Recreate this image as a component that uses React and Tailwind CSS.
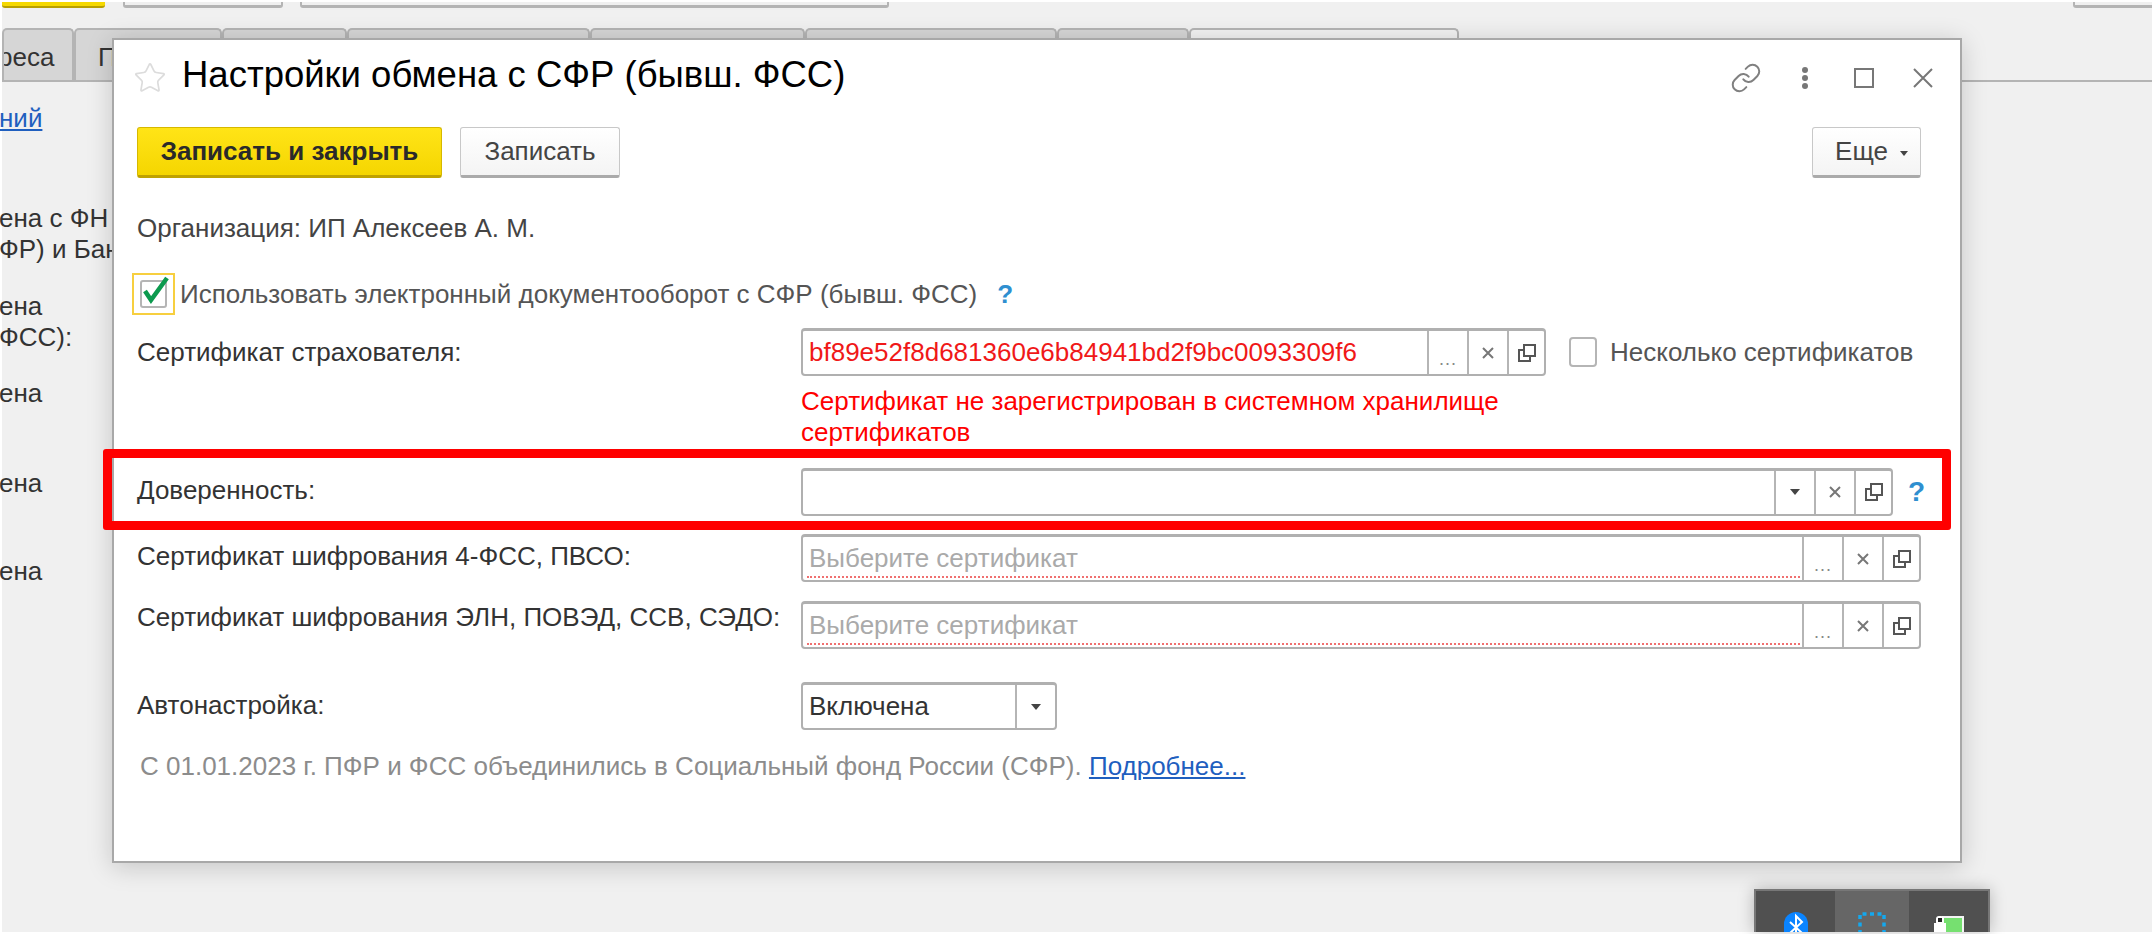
import React from "react";
import { Link, Star } from "lucide-react";

const CopyIcon = () => (
  <svg width="20" height="20" viewBox="0 0 20 20" fill="none" stroke="#555" strokeWidth="2">
    <rect x="7" y="2" width="11" height="11" />
    <path d="M7 7H2v11h11v-5" />
  </svg>
);

const CrossIcon = () => (
  <svg width="12" height="12" viewBox="0 0 12 12" stroke="#777" strokeWidth="2">
    <path d="M1 1l10 10M11 1L1 11" />
  </svg>
);

const DotsIcon = () => (
  <span className="mt-3 text-[18px] leading-none tracking-[1px] text-[#888]">...</span>
);

const ArrowIcon = () => <span className="h-0 w-0 border-x-[5px] border-t-[6px] border-x-transparent border-t-[#444]" />;

const FieldButton = ({ children, className = "w-[40px]" }) => (
  <div className={`flex h-full shrink-0 items-center justify-center border-l-2 border-[#b5b5b5] ${className}`}>
    {children}
  </div>
);

const Field = ({ width, children, first, required }) => (
  <div
    className="relative flex h-[48px] shrink-0 rounded-[4px] border-2 border-t-[3px] border-[#b0b0b0] bg-white"
    style={{ width }}
  >
    <div className="flex min-w-0 flex-1 items-center overflow-hidden whitespace-nowrap pl-[6px] text-[26px]">{children}</div>
    {required && <div className="absolute bottom-[2px] left-[4px] right-[119px] border-b-2 border-dotted border-[#f07070]" />}
    <FieldButton>{first}</FieldButton>
    <FieldButton>
      <CrossIcon />
    </FieldButton>
    <FieldButton className="w-[37px]">
      <CopyIcon />
    </FieldButton>
  </div>
);

const Label = ({ children, className = "" }) => (
  <div className={`w-[664px] shrink-0 text-[26px] leading-[30px] text-[#333] ${className}`}>{children}</div>
);

const Help = ({ className }) => <span className={`font-bold text-[#2f8fd0] ${className}`}>?</span>;

const BackgroundTab = ({ width, children, active }) => (
  <div
    className={`h-[52px] shrink-0 overflow-hidden rounded-t-[5px] border-2 border-b-0 border-[#b4b4b4] pt-[8px] text-[26px] text-[#333] ${
      active ? "bg-[#f2f2f2]" : "bg-[#d6d6d6]"
    }`}
    style={{ width }}
  >
    {children}
  </div>
);

const App = () => {
  return (
    <div
      className="relative h-[934px] w-[2152px] overflow-hidden bg-white pb-[2px] pl-[2px] pt-[2px]"
      style={{ fontFamily: '"Liberation Sans", Arial, sans-serif' }}
    >
      <div className="h-full bg-[#f0f0f0]">
        {/* page behind the dialog */}
        <div className="flex h-[6px]">
          <div className="w-[103px] rounded-b-[3px] border-b-2 border-[#b89f00] bg-[#f5d800]" />
          <div className="ml-[18px] w-[160px] rounded-b-[3px] border-x-2 border-b-[3px] border-[#b4b4b4]" />
          <div className="ml-[17px] w-[589px] rounded-b-[3px] border-x-2 border-b-[3px] border-[#b4b4b4]" />
          <div className="ml-auto w-[79px] rounded-bl-[3px] border-b-[3px] border-l-2 border-[#b4b4b4]" />
        </div>
        <div className="mt-[20px] flex border-b-2 border-[#b4b4b4]">
          <BackgroundTab width="72px">
            <div className="ml-[-6px]">реса</div>
          </BackgroundTab>
          <BackgroundTab width="148px">
            <div className="ml-[22px]">П</div>
          </BackgroundTab>
          <BackgroundTab width="125px" />
          <BackgroundTab width="243px" />
          <BackgroundTab width="215px" />
          <BackgroundTab width="252px" />
          <BackgroundTab width="132px" />
          <BackgroundTab width="270px" active />
        </div>
        <div className="ml-[-3px] w-[113px] overflow-hidden whitespace-nowrap text-[26px] leading-[31px] text-[#333]">
          <div className="mt-[21px] text-[#1f5fbf] underline">ний</div>
          <div className="mt-[69px]">ена с ФН</div>
          <div>ФР) и Бан</div>
          <div className="mt-[26px]">ена</div>
          <div>ФСС):</div>
          <div className="mt-[25px]">ена</div>
          <div className="mt-[59px]">ена</div>
          <div className="mt-[57px]">ена</div>
        </div>
      </div>

      {/* dialog window */}
      <div className="absolute left-[112px] top-[38px] h-[825px] w-[1850px] border-2 border-[#a8a8a8] bg-white pl-[23px] pr-[39px] shadow-[0_4px_24px_rgba(0,0,0,0.18)]">
        <div className="flex h-[87px] items-center pb-[12px]">
          <Star size={34} strokeWidth={1.2} className="ml-[-4px] text-[#dcdcdc]" />
          <h1 className="mb-[4px] ml-[15px] text-[36.5px] font-normal text-black">Настройки обмена с СФР (бывш. ФСС)</h1>
          <div className="ml-auto mr-[-31px] flex items-center text-[#808080]">
            <div className="flex w-[59px] justify-center">
              <Link size={32} strokeWidth={1.5} />
            </div>
            <div className="flex w-[59px] justify-center">
              <svg width="8" height="22" viewBox="0 0 8 22" fill="#777">
                <circle cx="4" cy="3" r="3" />
                <circle cx="4" cy="11" r="3" />
                <circle cx="4" cy="19" r="3" />
              </svg>
            </div>
            <div className="flex w-[59px] justify-center">
              <span className="h-[20px] w-[20px] border-2 border-[#777]" />
            </div>
            <div className="flex w-[59px] justify-center">
              <svg width="20" height="20" viewBox="0 0 20 20" stroke="#777" strokeWidth="2">
                <path d="M1 1l18 18M19 1L1 19" />
              </svg>
            </div>
          </div>
        </div>

        <div className="flex h-[51px] items-stretch">
          <button className="w-[305px] rounded-[3px] border border-[#d6b800] border-b-[3px] border-b-[#bfa200] bg-gradient-to-b from-[#ffe416] to-[#f5d600] text-[26px] font-bold text-[#2a2a2a]">
            Записать и закрыть
          </button>
          <button className="ml-[18px] w-[160px] rounded-[3px] border border-[#c8c8c8] border-b-[3px] border-b-[#aaaaaa] bg-gradient-to-b from-white to-[#f4f4f4] text-[26px] text-[#444]">
            Записать
          </button>
          <button className="ml-auto flex w-[109px] items-center justify-center gap-[12px] rounded-[3px] border border-[#c8c8c8] border-b-[3px] border-b-[#aaaaaa] bg-gradient-to-b from-white to-[#f4f4f4] pl-[10px] text-[26px] text-[#444]">
            Еще
            <span className="mt-[3px] h-0 w-0 border-x-[4px] border-t-[5px] border-x-transparent border-t-[#444]" />
          </button>
        </div>

        <div className="mt-[36px] text-[26px] leading-[28px] text-[#444]">Организация: ИП Алексеев А. М.</div>

        <div className="mt-[31px] flex h-[42px] items-center">
          <div className="ml-[-5px] flex h-[42px] w-[43px] items-center justify-center border-2 border-[#f7cf3f]">
            <div className="relative h-[28px] w-[27px] rounded-[3px] border-2 border-[#b5b5b5]">
              <svg width="30" height="30" viewBox="0 0 30 30" fill="none" stroke="#0c9a4e" strokeWidth="4.5" className="absolute left-[0px] top-[-8px]">
                <path d="M3 17l6 9L25 4" />
              </svg>
            </div>
          </div>
          <span className="ml-[5px] text-[26px] text-[#555]">Использовать электронный документооборот с СФР (бывш. ФСС)</span>
          <Help className="ml-[20px] text-[26px]" />
        </div>

        <div className="mt-[13px] flex items-center">
          <Label>Сертификат страхователя:</Label>
          <Field width="745px" first={<DotsIcon />}>
            <span className="text-[#f01818]">bf89e52f8d681360e6b84941bd2f9bc0093309f6</span>
          </Field>
          <span className="ml-[23px] h-[30px] w-[28px] rounded-[4px] border-2 border-[#b5b5b5]" />
          <span className="ml-[13px] text-[26px] text-[#555]">Несколько сертификатов</span>
        </div>

        <div className="ml-[664px] mt-[10px] w-[745px] text-[26px] leading-[31px] text-[#ff0000]">
          Сертификат не зарегистрирован в системном хранилище сертификатов
        </div>

        {/* red highlight round the row */}
        <div className="ml-[-34px] mr-[-30px] mt-[1px] flex h-[81px] items-center rounded-[3px] border-[9px] border-[#ff0000] pl-[25px] pt-[4px]">
          <Label className="mb-[4px]">Доверенность:</Label>
          <Field width="1092px" first={<ArrowIcon />} />
          <Help className="ml-[15px] text-[28px]" />
        </div>

        <div className="mt-[4px] flex items-center">
          <Label className="mb-[4px]">Сертификат шифрования 4-ФСС, ПВСО:</Label>
          <Field width="1120px" first={<DotsIcon />} required>
            <span className="text-[#aaaaaa]">Выберите сертификат</span>
          </Field>
        </div>

        <div className="mt-[19px] flex items-center">
          <Label className="mb-[16px]">Сертификат шифрования ЭЛН, ПОВЭД, ССВ, СЭДО:</Label>
          <Field width="1120px" first={<DotsIcon />} required>
            <span className="text-[#aaaaaa]">Выберите сертификат</span>
          </Field>
        </div>

        <div className="mt-[33px] flex items-center">
          <Label className="mb-[2px]">Автонастройка:</Label>
          <div className="flex h-[48px] w-[256px] rounded-[4px] border-2 border-t-[3px] border-[#b0b0b0]">
            <div className="flex flex-1 items-center pl-[6px] text-[26px] text-[#333]">Включена</div>
            <FieldButton>
              <ArrowIcon />
            </FieldButton>
          </div>
        </div>

        <div className="mt-[22px] pl-[3px] text-[26px] leading-[28px] text-[#8c8c8c]">
          С 01.01.2023 г. ПФР и ФСС объединились в Социальный фонд России (СФР).{" "}
          <span className="text-[#1f5fbf] underline">Подробнее...</span>
        </div>
      </div>

      {/* tray popup */}
      <div className="absolute bottom-[2px] left-[1754px] flex h-[43px] w-[236px] overflow-hidden border-2 border-b-0 border-[#777] bg-[#505050] shadow-[0_0_16px_rgba(0,0,0,0.25)]">
        <div className="flex w-[79px] justify-center pt-[21px]">
          <svg width="24" height="30" viewBox="0 0 24 30">
            <rect width="24" height="40" rx="12" fill="#0a84ff" />
            <path d="M6 10l12 11-6 6V4l6 6L6 21" fill="none" stroke="white" strokeWidth="2" />
          </svg>
        </div>
        <div className="flex w-[74px] justify-center bg-[#666666] pt-[21px]">
          <svg width="28" height="22" viewBox="0 0 28 22" fill="none" stroke="#14a8ee" strokeWidth="3.5" strokeDasharray="4 3.5">
            <path d="M2 22V2h24v20" />
          </svg>
        </div>
        <div className="flex flex-1 justify-center pt-[24px]">
          <svg width="30" height="20" viewBox="0 0 30 20">
            <rect x="9" y="2" width="20" height="22" fill="#76e070" stroke="#f4f4f4" strokeWidth="2" />
            <rect x="0" y="8" width="12" height="14" fill="white" />
            <rect x="2" y="1" width="8" height="9" rx="3" fill="white" />
            <rect x="4" y="3" width="4" height="4" fill="#222" />
          </svg>
        </div>
      </div>
    </div>
  );
};

export default App;
